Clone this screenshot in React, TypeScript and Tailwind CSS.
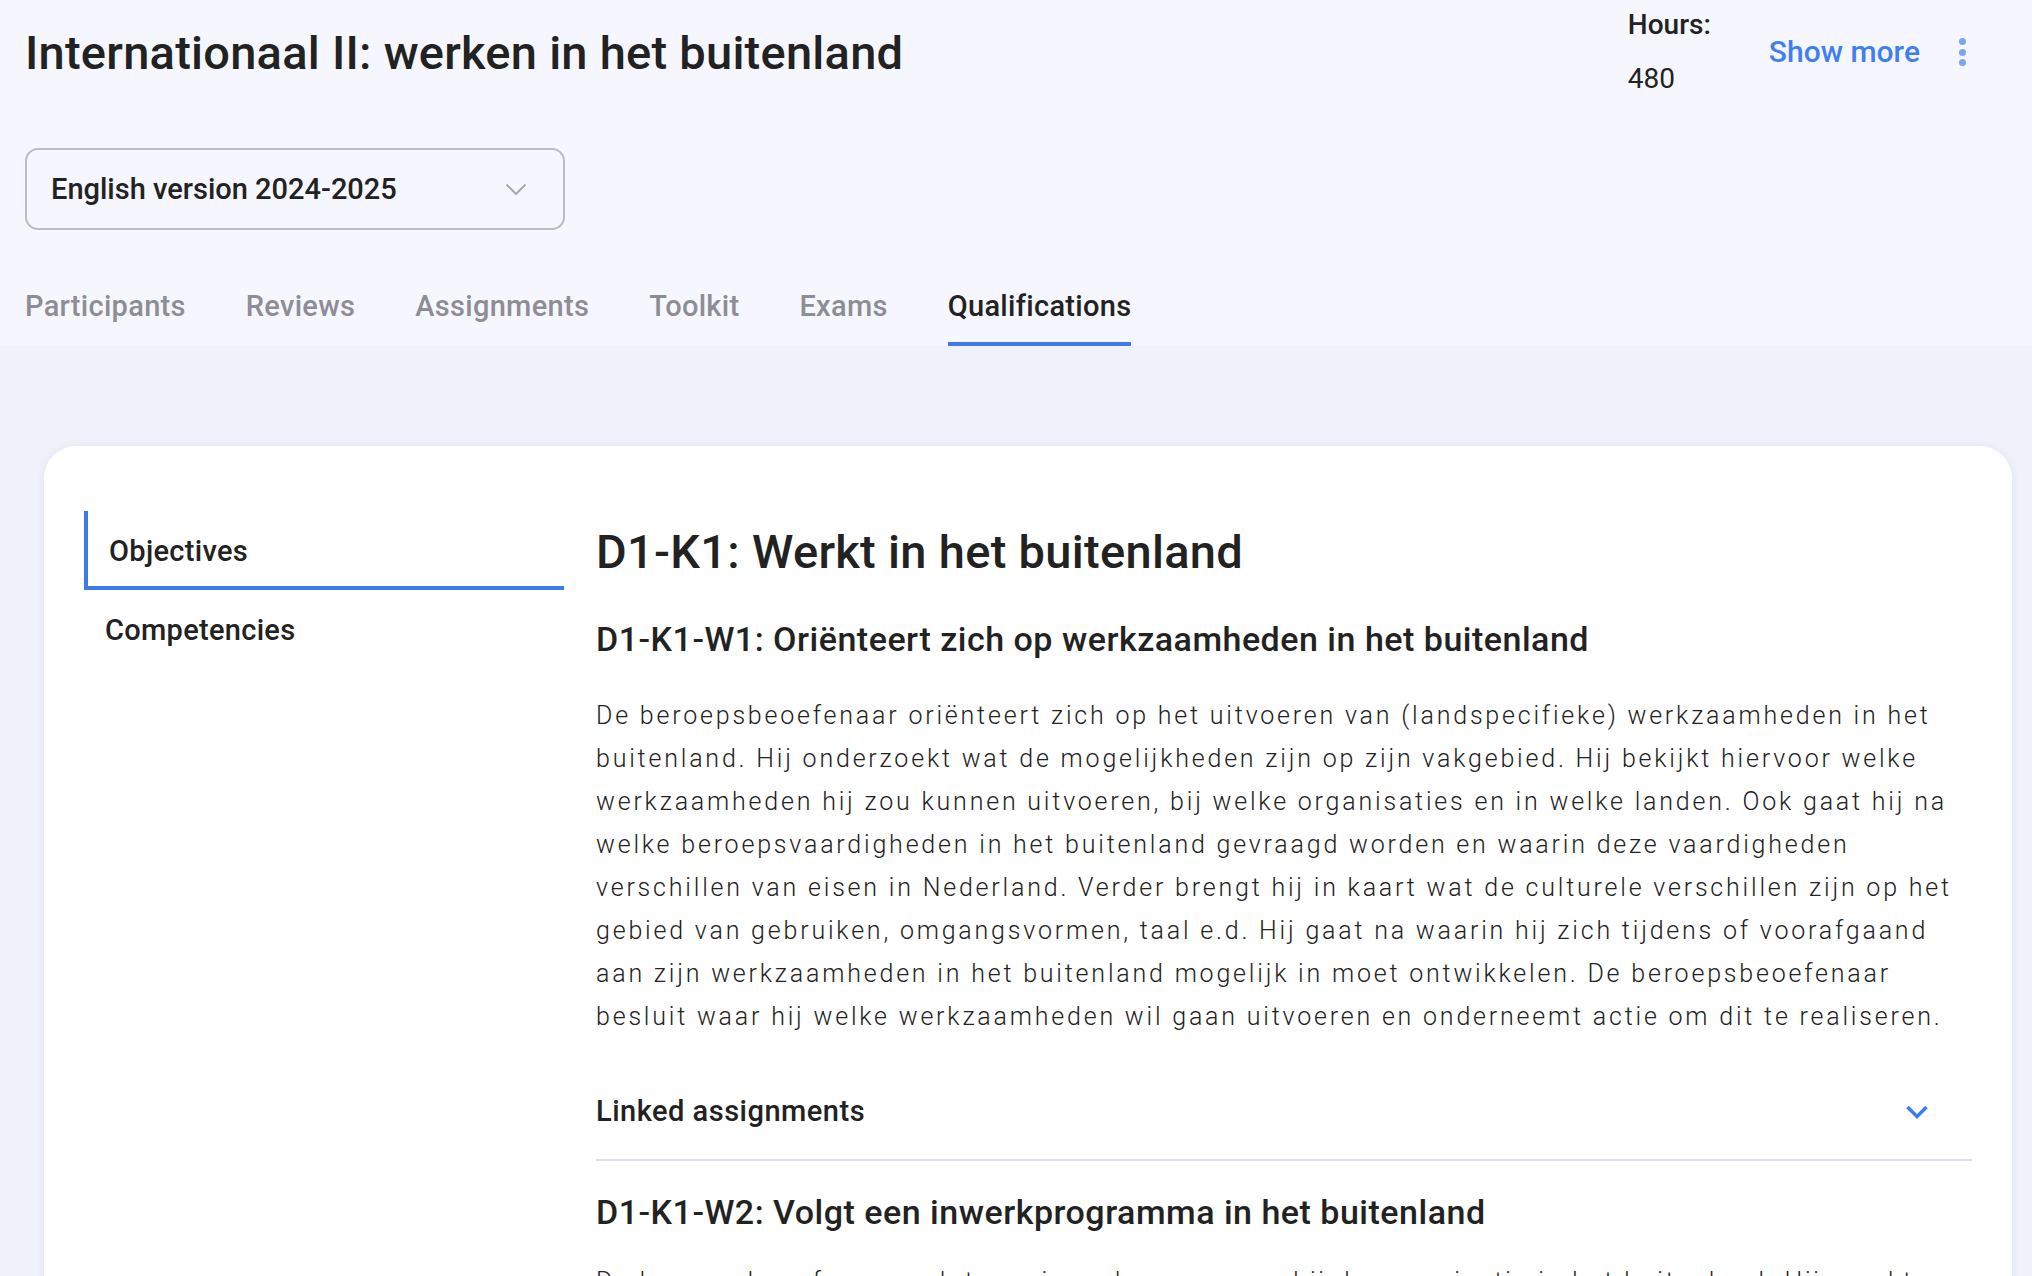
import { useState } from "react"

const tabs = ["Participants", "Reviews", "Assignments", "Toolkit", "Exams", "Qualifications"]

function ChevronDown({ className }: { className?: string }) {
  return (
    <svg viewBox="0 0 24 16" className={className} fill="none" stroke="currentColor">
      <path d="M2.5 3 L12 12.5 L21.5 3" strokeWidth="3.5" strokeLinejoin="miter" />
    </svg>
  )
}

export default function App() {
  const [activeTab, setActiveTab] = useState("Qualifications")
  const [activeNav, setActiveNav] = useState("Objectives")

  return (
    <div className="min-h-screen bg-[#eff1fb] font-['Roboto',sans-serif] text-[#222]">
      {/* Header */}
      <header className="bg-[#f6f7fe] pl-[25px] pr-[66px]">
        <div className="flex items-start justify-between">
          <h1 className="pt-[25px] text-[47px] leading-[56px] font-medium tracking-[0.25px]">
            Internationaal II: werken in het buitenland
          </h1>
          <div className="flex items-center pt-[7px]">
            <div>
              <div className="text-[28px] leading-[36px] font-medium">Hours:</div>
              <div className="mt-[18px] text-[28px] leading-[36px]">480</div>
            </div>
            <button className="ml-[58px] text-[30px] leading-[36px] font-medium text-[#3f7ff0]">
              Show more
            </button>
            <button className="ml-[39px] flex flex-col gap-[3.5px]">
              <span className="h-[7px] w-[7px] rounded-full bg-[#7ca4f4]" />
              <span className="h-[7px] w-[7px] rounded-full bg-[#7ca4f4]" />
              <span className="h-[7px] w-[7px] rounded-full bg-[#7ca4f4]" />
            </button>
          </div>
        </div>

        <div className="mt-[51px] flex h-[82px] w-[540px] items-center justify-between rounded-[13px] border-2 border-[#babace] pl-[24px] pr-[36px]">
          <span className="text-[29px] leading-[36px] font-medium">English version 2024-2025</span>
          <svg viewBox="0 0 22 13" className="h-[13px] w-[22px] text-[#a8a8b8]" fill="none" stroke="currentColor">
            <path d="M1.5 1.5 L11 11 L20.5 1.5" strokeWidth="2" />
          </svg>
        </div>

        <nav className="mt-[58px] flex gap-[60px]">
          {tabs.map((t) => (
            <button
              key={t}
              onClick={() => setActiveTab(t)}
              className={
                t === activeTab
                  ? "border-b-4 border-[#3d7be8] pb-[18px] text-[29px] leading-[36px] font-medium tracking-[0.3px] text-[#222]"
                  : "border-b-4 border-transparent pb-[18px] text-[29px] leading-[36px] font-medium tracking-[0.3px] text-[#8d8d97]"
              }
            >
              {t}
            </button>
          ))}
        </nav>
      </header>

      {/* Card */}
      <main className="pl-[44px] pr-[20px] pt-[100px]">
        <div className="flex gap-[32px] rounded-[32px] bg-white px-[40px] pb-[60px] pt-[65px] shadow-[0_0_8px_rgba(40,50,110,0.07)]">
          <aside className="w-[480px] shrink-0">
            <button
              onClick={() => setActiveNav("Objectives")}
              className={
                activeNav === "Objectives"
                  ? "flex h-[79px] w-full items-center border-b-4 border-l-4 border-[#3d7be8] pl-[21px] pt-[7px] text-[29px] font-medium tracking-[0.3px]"
                  : "flex h-[79px] w-full items-center pl-[21px] pt-[3px] text-[29px] font-medium tracking-[0.3px]"
              }
            >
              Objectives
            </button>
            <button
              onClick={() => setActiveNav("Competencies")}
              className={
                activeNav === "Competencies"
                  ? "flex h-[79px] w-full items-center border-b-4 border-l-4 border-[#3d7be8] pl-[21px] pt-[7px] text-[29px] font-medium tracking-[0.3px]"
                  : "flex h-[79px] w-full items-center pl-[21px] pt-[3px] text-[29px] font-medium tracking-[0.3px]"
              }
            >
              Competencies
            </button>
          </aside>

          <section className="min-w-0 flex-1 pt-[13px]">
            <h2 className="text-[47px] leading-[56px] font-medium tracking-[0.3px]">D1-K1: Werkt in het buitenland</h2>

            <h3 className="mt-[39px] text-[34px] leading-[40px] font-medium tracking-[0.5px]">
              D1-K1-W1: Oriënteert zich op werkzaamheden in het buitenland
            </h3>
            <p className="mt-[35px] text-[25px] leading-[43px] font-light tracking-[2.8px] text-[#222]">
              De beroepsbeoefenaar oriënteert zich op het uitvoeren van (landspecifieke) werkzaamheden in het
              buitenland. Hij onderzoekt wat de mogelijkheden zijn op zijn vakgebied. Hij bekijkt hiervoor welke
              werkzaamheden hij zou kunnen uitvoeren, bij welke organisaties en in welke landen. Ook gaat hij na
              welke beroepsvaardigheden in het buitenland gevraagd worden en waarin deze vaardigheden verschillen
              van eisen in Nederland. Verder brengt hij in kaart wat de culturele verschillen zijn op het gebied van
              gebruiken, omgangsvormen, taal e.d. Hij gaat na waarin hij zich tijdens of voorafgaand aan zijn
              werkzaamheden in het buitenland mogelijk in moet ontwikkelen. De beroepsbeoefenaar besluit waar hij
              welke werkzaamheden wil gaan uitvoeren en onderneemt actie om dit te realiseren.
            </p>

            <button className="mt-[27px] flex h-[96px] w-full items-center justify-between border-b-2 border-[#dedde8] pr-[43px]">
              <span className="text-[29px] font-medium tracking-[0.5px]">Linked assignments</span>
              <ChevronDown className="h-[16px] w-[24px] text-[#3b7ded]" />
            </button>

            <h3 className="mt-[31px] text-[34px] leading-[40px] font-medium tracking-[0.5px]">
              D1-K1-W2: Volgt een inwerkprogramma in het buitenland
            </h3>
            <p className="mt-[28px] text-[25px] leading-[43px] font-light tracking-[2.8px] text-[#222]">
              De beroepsbeoefenaar volgt een inwerkprogramma bij de organisatie in het buitenland. Hij maakt kennis
              met de werkwijze, de collega's en de cultuur van de organisatie.
            </p>
          </section>
        </div>
      </main>
    </div>
  )
}
